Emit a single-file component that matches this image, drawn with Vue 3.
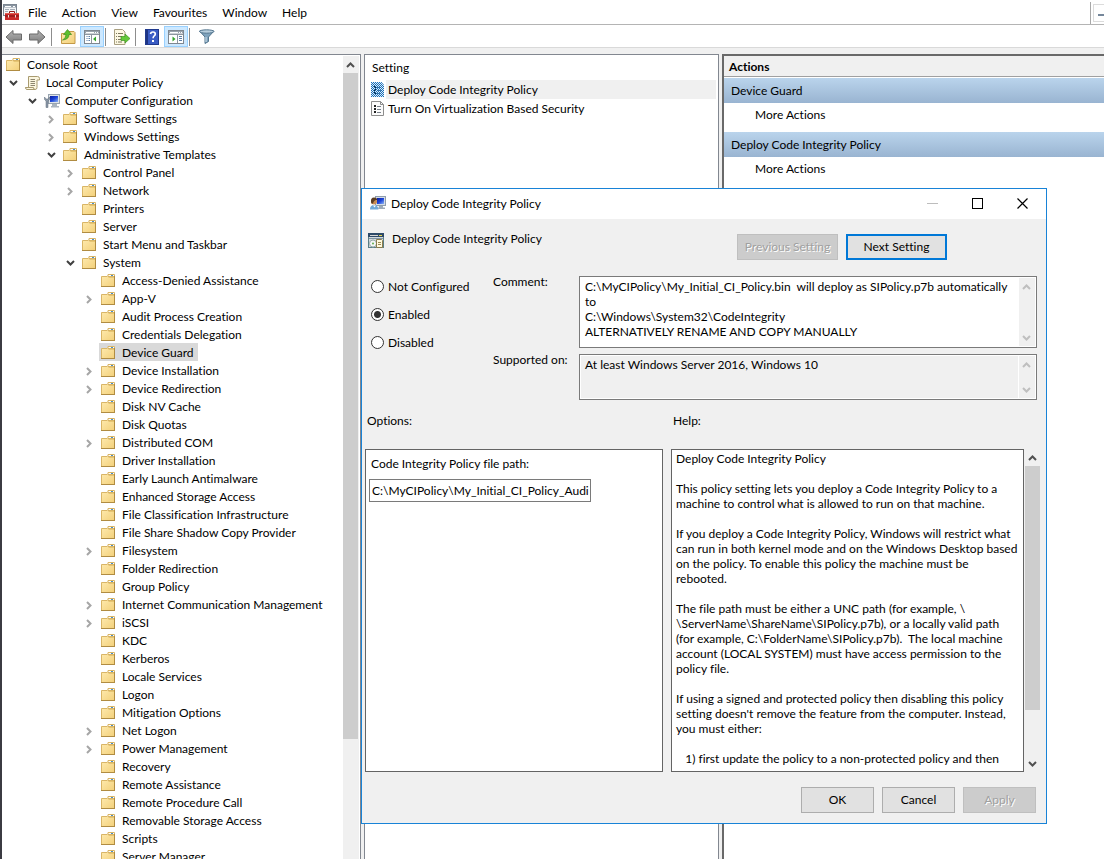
<script setup>
import { ref } from 'vue'

const menus = ['File', 'Action', 'View', 'Favourites', 'Window', 'Help']

const tools = [
  { icon: 'back', label: 'Back' },
  { icon: 'forward', label: 'Forward' },
  { sep: true },
  { icon: 'up', label: 'Up one level' },
  { icon: 'showtree', label: 'Show console tree', on: true },
  { sep: true },
  { icon: 'export', label: 'Export list' },
  { sep: true },
  { icon: 'help', label: 'Help' },
  { icon: 'showactions', label: 'Show action pane', on: true },
  { sep: true },
  { icon: 'filter', label: 'Filter' },
]

const node = (level, name, state = '', icon = 'folder') => ({ level, name, state, icon })
const tree = [
  node(0, 'Console Root'),
  node(1, 'Local Computer Policy', 'open', 'scroll'),
  node(2, 'Computer Configuration', 'open', 'computer'),
  node(3, 'Software Settings', 'closed'),
  node(3, 'Windows Settings', 'closed'),
  node(3, 'Administrative Templates', 'open'),
  node(4, 'Control Panel', 'closed'),
  node(4, 'Network', 'closed'),
  node(4, 'Printers'),
  node(4, 'Server'),
  node(4, 'Start Menu and Taskbar'),
  node(4, 'System', 'open'),
  node(5, 'Access-Denied Assistance'),
  node(5, 'App-V', 'closed'),
  node(5, 'Audit Process Creation'),
  node(5, 'Credentials Delegation'),
  node(5, 'Device Guard'),
  node(5, 'Device Installation', 'closed'),
  node(5, 'Device Redirection', 'closed'),
  node(5, 'Disk NV Cache'),
  node(5, 'Disk Quotas'),
  node(5, 'Distributed COM', 'closed'),
  node(5, 'Driver Installation'),
  node(5, 'Early Launch Antimalware'),
  node(5, 'Enhanced Storage Access'),
  node(5, 'File Classification Infrastructure'),
  node(5, 'File Share Shadow Copy Provider'),
  node(5, 'Filesystem', 'closed'),
  node(5, 'Folder Redirection'),
  node(5, 'Group Policy'),
  node(5, 'Internet Communication Management', 'closed'),
  node(5, 'iSCSI', 'closed'),
  node(5, 'KDC'),
  node(5, 'Kerberos'),
  node(5, 'Locale Services'),
  node(5, 'Logon'),
  node(5, 'Mitigation Options'),
  node(5, 'Net Logon', 'closed'),
  node(5, 'Power Management', 'closed'),
  node(5, 'Recovery'),
  node(5, 'Remote Assistance'),
  node(5, 'Remote Procedure Call'),
  node(5, 'Removable Storage Access'),
  node(5, 'Scripts'),
  node(5, 'Server Manager'),
]
const selected = ref('Device Guard')

const settings = [
  { name: 'Deploy Code Integrity Policy', icon: 'settingsel' },
  { name: 'Turn On Virtualization Based Security', icon: 'setting' },
]
const current = ref(settings[0].name)
const actionGroups = ['Device Guard', 'Deploy Code Integrity Policy']

const states = ['Not Configured', 'Enabled', 'Disabled']
const state = ref('Enabled')

const comment = ref(`C:\\MyCIPolicy\\My_Initial_CI_Policy.bin  will deploy as SIPolicy.p7b automatically
to
C:\\Windows\\System32\\CodeIntegrity
ALTERNATIVELY RENAME AND COPY MANUALLY`)
const supported = 'At least Windows Server 2016, Windows 10'
const filePath = ref('C:\\MyCIPolicy\\My_Initial_CI_Policy_Audi')

const helpText = `Deploy Code Integrity Policy

This policy setting lets you deploy a Code Integrity Policy to a
machine to control what is allowed to run on that machine.

If you deploy a Code Integrity Policy, Windows will restrict what
can run in both kernel mode and on the Windows Desktop based
on the policy. To enable this policy the machine must be
rebooted.

The file path must be either a UNC path (for example, \\
\\ServerName\\ShareName\\SIPolicy.p7b), or a locally valid path
(for example, C:\\FolderName\\SIPolicy.p7b).  The local machine
account (LOCAL SYSTEM) must have access permission to the
policy file.

If using a signed and protected policy then disabling this policy
setting doesn't remove the feature from the computer. Instead,
you must either:

   1) first update the policy to a non-protected policy and then`
</script>

<template>
  <div class="console">
    <svg class="defs" width="0" height="0" aria-hidden="true">
      <defs>
        <linearGradient id="gFolder" x1="0" y1="0" x2="1" y2="1">
          <stop offset="0" stop-color="#feeaae" /><stop offset="1" stop-color="#f3d07a" />
        </linearGradient>
        <linearGradient id="gScreen" x1="0" y1="0" x2="1" y2="1">
          <stop offset="0" stop-color="#0a1c9c" /><stop offset="0.5" stop-color="#1c44d8" /><stop offset="1" stop-color="#8fb6f6" />
        </linearGradient>
        <linearGradient id="gArrow" x1="0" y1="0" x2="0" y2="1">
          <stop offset="0" stop-color="#b4b4b4" /><stop offset="1" stop-color="#7c7c7c" />
        </linearGradient>
        <pattern id="pDither" width="2" height="2" patternUnits="userSpaceOnUse">
          <rect width="1" height="1" fill="#1a6fb8" /><rect x="1" y="1" width="1" height="1" fill="#1a6fb8" />
        </pattern>
      </defs>
      <symbol id="i-folder" viewBox="0 0 16 16">
        <path d="M.5 3.500h5.500l1-1h6.500v11H.5z" fill="url(#gFolder)" stroke="#d9b566" />
        <path d="M7 1.500h6.500v2H7z" fill="#fff" stroke="#d9b566" /><path d="M10 2.500h2" stroke="#4a90c8" />
        <path d="M7.500 4.500h6" stroke="#e6c573" /><path d="M0 13.500h14M13.500 3v11" stroke="#b08c42" />
      </symbol>
      <symbol id="i-scroll" viewBox="0 0 16 16">
        <path d="M3.500 1.500h9q2 0 2 2v1.500h-2.500v7.500q0 2-2 2H2q-1.500 0-1.500-2h3z" fill="#fbf6df" stroke="#a99b70" />
        <path d="M5.500 4.500h4.500M5.500 6.500h4.500M5.500 8.500h4.500M5.500 10.500h4.500" stroke="#8d8670" />
        <path d="M.5 12.500h8q0 2 1.500 2" fill="none" stroke="#a99b70" />
      </symbol>
      <symbol id="i-computer" viewBox="0 0 16 16">
        <rect x="4.500" y="1.500" width="11" height="9" fill="#dfe3e8" stroke="#98a4b0" />
        <rect x="6" y="3" width="8" height="6" fill="url(#gScreen)" />
        <path d="M8 11h5v2h2v1.500H7V13h1z" fill="#a9b4bf" />
        <path d="M.5 4v2.500L2 8v6.500h2V8l1.500-1.500V4L4 6H2z" fill="#8b98a6" stroke="#5c6b7a" stroke-width=".5" />
      </symbol>
      <symbol id="i-user" viewBox="0 0 16 16">
        <rect x="5.500" y="1.500" width="10" height="9" fill="#d4dce6" stroke="#8f9dac" />
        <rect x="7" y="3" width="7" height="6" fill="url(#gScreen)" />
        <path d="M9 11h4v1.500h2V14H8z" fill="#9eacb9" />
        <path d="M0 14.500q0-4.500 4-4.500t4.500 4.500z" fill="#6fa8d8" />
        <circle cx="4" cy="6.500" r="3" fill="#c98c52" /><path d="M1 7q-.5-4.500 3-4.500T7 5Q4 4.500 3 8.500H1.500z" fill="#5b3d23" />
        <path d="M3 10.500l1.500 2 1.500-2z" fill="#fff" />
      </symbol>
      <symbol id="i-policy" viewBox="0 0 16 16">
        <rect x=".5" y=".5" width="15" height="14" fill="#d3d9de" stroke="#5b7f86" />
        <path d="M0 0h16v4H0z" fill="#2e4a68" /><path d="M2 2.500h8" stroke="#d7d7d7" /><path d="M11 2.500h3" stroke="#e9d84b" />
        <path d="M1 5.500h14" stroke="#7f95a3" />
        <circle cx="5" cy="10.500" r="3.500" fill="#f5f7f7" stroke="#9aa" /><circle cx="5" cy="10.500" r="1" fill="#5fae4c" />
        <path d="M8.500 6.500h5l1 1v7h-6z" fill="#fff9dc" stroke="#8b7c4d" /><path d="M10 9.500h3M10 11.500h3" stroke="#9b8a55" />
      </symbol>
      <symbol id="i-mmc" viewBox="0 0 16 16">
        <rect x=".5" y=".5" width="13" height="11" fill="#f3f5f7" stroke="#7d8792" />
        <path d="M1 1h12v2.500H1z" fill="#8a95a1" /><path d="M2 2.500h6M10 2.500h2" stroke="#fff" />
        <path d="M2 5.500h4M7 5.500h5M2 7.500h3" stroke="#a4adb6" />
        <path d="M6.500 9V7.500h5V9" fill="none" stroke="#8d1c1c" />
        <rect x="2" y="9" width="14" height="7" fill="#c92b2b" /><path d="M2 9h14v1H2z" fill="#e05c50" />
        <path d="M2 12h14" stroke="#7d1515" /><path d="M5 11h1v2.500H5zM12 11h1v2.500h-1z" fill="#f0dada" />
      </symbol>
      <symbol id="i-setting" viewBox="0 0 14 16">
        <path d="M.5.5h9l3 3v11H.5z" fill="#fbfbfb" stroke="#8d8d8d" /><path d="M9.500.5v3h3" fill="none" stroke="#8d8d8d" />
        <path d="M3 5h2M3 8h2M3 11h2" stroke="#222" stroke-width="2" /><path d="M6 5.500h4M6 8.500h4M6 11.500h4" stroke="#77808a" />
      </symbol>
      <symbol id="i-settingsel" viewBox="0 0 14 16">
        <path d="M0 0h10.500l2.500 3v12H0z" fill="#dcebf7" />
        <path d="M3 5h2M3 8h2M3 11h2" stroke="#123" stroke-width="2" /><path d="M6 5.500h4M6 8.500h4M6 11.500h4" stroke="#4a7ba5" />
        <path d="M0 0h10.500l2.500 3v12H0z" fill="url(#pDither)" />
      </symbol>
      <symbol id="i-back" viewBox="0 0 18 16">
        <path d="M1 8l7-6.500V5h8.500v6H8v3.500z" fill="url(#gArrow)" stroke="#6b6b6b" />
      </symbol>
      <symbol id="i-forward" viewBox="0 0 18 16">
        <path d="M16 8L9 1.500V5H.5v6H9v3.500z" fill="url(#gArrow)" stroke="#6b6b6b" />
      </symbol>
      <symbol id="i-up" viewBox="0 0 18 16">
        <path d="M2.500 4.500h6l1-2h5.500l1 1v11H2.500z" fill="url(#gFolder)" stroke="#c49a48" />
        <path d="M3.500 11Q7 9.500 7 5.500H4.500L8.500.5l4 5H10q0 5-6.500 5.500z" fill="#5cc02e" stroke="#3c8f1e" stroke-width=".7" />
      </symbol>
      <symbol id="i-showtree" viewBox="0 0 18 16">
        <rect x="1.500" y="1.500" width="15" height="13" fill="#fff" stroke="#7f8790" /><path d="M2 2h14v2.500H2z" fill="#9aa3ad" />
        <path d="M3 3.500h8M12 3.500h1M14 3.500h1" stroke="#fff" /><path d="M2 5.500h14M8.500 6v8" stroke="#8e969f" />
        <path d="M3.500 7.500h3.500M3.500 9.500h3.500M3.500 11.500h3.500" stroke="#5d7fa8" stroke-dasharray="1 1 2" /><path d="M13 7.500v5l-3-2.500z" fill="#34a52a" />
      </symbol>
      <symbol id="i-showactions" viewBox="0 0 18 16">
        <rect x="1.500" y="1.500" width="15" height="13" fill="#fff" stroke="#7f8790" /><path d="M2 2h14v2.500H2z" fill="#9aa3ad" />
        <path d="M3 3.500h8M12 3.500h1M14 3.500h1" stroke="#fff" /><path d="M2 5.500h14M10.500 6v8" stroke="#8e969f" />
        <path d="M12 7.500h3M12 9.500h3M12 11.500h3" stroke="#5d7fa8" /><path d="M5.500 7.500v5l3-2.500z" fill="#34a52a" />
      </symbol>
      <symbol id="i-export" viewBox="0 0 18 16">
        <path d="M1.500.5h8l2.500 2.500v12.500H1.500z" fill="#fdf8e2" stroke="#a89f80" />
        <path d="M3 4.500h1M5 4.500h5M3 7.500h1M5 7.500h4M3 10.500h1M5 10.500h3M3 13h1M5 13h4" stroke="#7d7860" />
        <path d="M8 7.500h4V5l5 4.500-5 4.500v-2.500H8z" fill="#63c93a" stroke="#3d9422" stroke-width=".7" />
      </symbol>
      <symbol id="i-help" viewBox="0 0 18 16">
        <rect x="2.500" y=".5" width="13" height="15" fill="#3a5cc4" stroke="#203a8e" /><path d="M4 1v14" stroke="#1e3584" stroke-width="2" />
        <path d="M7.500 5q.3-2 2.500-2t2.300 2q0 1.300-1.300 2.100-.9.6-.9 2.100" fill="none" stroke="#fff" stroke-width="1.700" /><rect x="9" y="11" width="2" height="2" fill="#fff" />
      </symbol>
      <symbol id="i-filter" viewBox="0 0 18 16">
        <path d="M2.500 2l5.500 6v6.500l3.500-2V8L17 2z" fill="#7fa3bd" stroke="#53758e" />
        <ellipse cx="9.700" cy="2.500" rx="7.200" ry="1.700" fill="#b9cfde" stroke="#53758e" /><path d="M9 8v5" stroke="#d5e4ee" />
      </symbol>
      <symbol id="i-chevup" viewBox="0 0 9 6"><path d="M1 5l3.500-3.500L8 5" fill="none" stroke="currentColor" stroke-width="2" /></symbol>
      <symbol id="i-chevdown" viewBox="0 0 9 6"><path d="M1 1l3.500 3.500L8 1" fill="none" stroke="currentColor" stroke-width="2" /></symbol>
      <symbol id="i-chevright" viewBox="0 0 6 9"><path d="M1 1l3.500 3.500L1 8" fill="none" stroke="currentColor" stroke-width="2" /></symbol>
    </svg>

    <header class="menubar">
      <svg class="ic16"><use href="#i-mmc" /></svg>
      <nav class="menus">
        <button v-for="m in menus" :key="m" type="button">{{ m }}</button>
      </nav>
      <div class="mdi"><button type="button" aria-label="Minimise child window"><i /></button></div>
    </header>

    <div class="toolbar">
      <template v-for="(t, i) in tools" :key="i">
        <span v-if="t.sep" class="sep" />
        <button v-else type="button" class="tool" :class="{ on: t.on }" :aria-label="t.label">
          <svg width="18" height="16"><use :href="'#i-' + t.icon" /></svg>
        </button>
      </template>
    </div>

    <main class="panes">
      <section class="pane treepane">
        <ul class="tree">
          <li v-for="n in tree" :key="n.name" :class="'lv' + n.level">
            <button v-if="n.state" type="button" class="twist" :class="n.state" :aria-label="'Toggle ' + n.name">
              <svg v-if="n.state === 'open'" width="9" height="6"><use href="#i-chevdown" /></svg>
              <svg v-else width="6" height="9"><use href="#i-chevright" /></svg>
            </button>
            <span v-else-if="n.level" class="twist" />
            <button type="button" class="node" :class="{ selected: n.name === selected }" @click="selected = n.name">
              <svg class="ic16"><use :href="'#i-' + n.icon" /></svg>{{ n.name }}
            </button>
          </li>
        </ul>
        <div class="scrollbar long">
          <span class="arrow"><svg width="9" height="6"><use href="#i-chevup" /></svg></span>
          <span class="thumb" />
        </div>
      </section>

      <section class="pane listpane">
        <table class="list">
          <thead><tr><th scope="col">Setting</th></tr></thead>
          <tbody>
            <tr v-for="s in settings" :key="s.name" :class="{ selected: s.name === current }" @click="current = s.name">
              <td><div class="cell"><svg width="14" height="16"><use :href="'#i-' + s.icon" /></svg><span>{{ s.name }}</span></div></td>
            </tr>
          </tbody>
        </table>
      </section>

      <section class="actions">
        <h2>Actions</h2>
        <div v-for="g in actionGroups" :key="g" class="group">
          <h3>{{ g }}</h3>
          <button type="button">More Actions</button>
        </div>
      </section>
    </main>

    <div class="dialog" role="dialog" aria-labelledby="dlg-title">
      <div class="titlebar">
        <svg class="ic16"><use href="#i-user" /></svg>
        <span id="dlg-title">Deploy Code Integrity Policy</span>
        <button type="button" aria-label="Minimise" disabled><svg width="11" height="11"><path d="M0 5.500h11" stroke="#bdbdbd" /></svg></button>
        <button type="button" aria-label="Maximise"><svg width="11" height="11"><rect x=".5" y=".5" width="10" height="10" fill="none" stroke="#000" /></svg></button>
        <button type="button" aria-label="Close"><svg width="11" height="11"><path d="M.5.5l10 10M10.500.5l-10 10" stroke="#000" stroke-width="1.200" /></svg></button>
      </div>

      <div class="head">
        <svg class="ic16"><use href="#i-policy" /></svg>
        <span class="name">Deploy Code Integrity Policy</span>
        <button type="button" class="btn wide" disabled>Previous Setting</button>
        <button type="button" class="btn wide primary">Next Setting</button>
      </div>

      <div class="form">
        <div class="radios">
          <label v-for="s in states" :key="s"><input v-model="state" type="radio" name="state" :value="s" />{{ s }}</label>
        </div>
        <label for="comment">Comment:</label>
        <div class="field">
          <textarea id="comment" v-model="comment" />
          <div class="scrollbar off">
            <span class="arrow"><svg width="9" height="6"><use href="#i-chevup" /></svg></span>
            <span class="arrow"><svg width="9" height="6"><use href="#i-chevdown" /></svg></span>
          </div>
        </div>
        <label for="supported">Supported on:</label>
        <div class="field readonly">
          <textarea id="supported" :value="supported" readonly />
          <div class="scrollbar off">
            <span class="arrow"><svg width="9" height="6"><use href="#i-chevup" /></svg></span>
            <span class="arrow"><svg width="9" height="6"><use href="#i-chevdown" /></svg></span>
          </div>
        </div>
      </div>

      <div class="detail">
        <h4>Options:</h4>
        <h4>Help:</h4>
        <div class="box options">
          <label for="path">Code Integrity Policy file path:</label>
          <input id="path" v-model="filePath" type="text" />
        </div>
        <div class="helpwrap">
          <div class="box help">{{ helpText }}</div>
          <div class="scrollbar">
            <span class="arrow"><svg width="9" height="6"><use href="#i-chevup" /></svg></span>
            <span class="thumb" />
            <span class="arrow"><svg width="9" height="6"><use href="#i-chevdown" /></svg></span>
          </div>
        </div>
      </div>

      <div class="foot">
        <button type="button" class="btn">OK</button>
        <button type="button" class="btn">Cancel</button>
        <button type="button" class="btn" disabled>Apply</button>
      </div>
    </div>
  </div>
</template>

<style>
body { margin: 0; }
</style>

<style scoped>
.console {
  position: relative;
  display: flex;
  flex-direction: column;
  height: 100vh;
  overflow: hidden;
  box-sizing: border-box;
  border-left: 2px solid #3b3b42;
  background: #f0f0f0;
  color: #000;
  font: 12px/15px Lato, "Open Sans", sans-serif;
  font-variant-ligatures: none;
}
.console *, .console *::before { box-sizing: border-box; }
.defs { position: absolute; }
svg { display: block; flex: none; }
.ic16 { width: 16px; height: 16px; }
button, input, textarea { font: inherit; color: inherit; font-variant-ligatures: none; }
button { border: 0; padding: 0; margin: 0; background: none; }
h2, h3, h4, ul { margin: 0; padding: 0; font: inherit; list-style: none; }

.menubar { display: flex; align-items: center; flex: none; height: 25px; padding-left: 1px; background: #fff; border-bottom: 1px solid #b4b4b4; }
.menus { display: flex; gap: 15px; margin-left: 9px; flex: 1; }
.mdi { width: 14px; height: 22px; margin-top: 2px; border-left: 1px solid #a8a8a8; padding: 2px 0 0 2px; overflow: hidden; }
.mdi button { display: block; width: 22px; height: 18px; border: 1px solid #dcdcdc; }
.mdi i { display: block; width: 7px; height: 2px; margin: 4px 0 0 4px; background: #75879a; }

.toolbar { display: flex; align-items: center; flex: none; height: 23px; padding-top: 1px; background: #fff; border-bottom: 1px solid #d9d9d9; }
.tool { display: flex; align-items: center; justify-content: center; width: 24px; height: 21px; padding-top: 1px; border: 1px solid transparent; }
.tool.on { background: #cce8ff; border-color: #99d1ff; }
.sep { width: 1px; height: 18px; margin: 0 4px 0 1px; background: #8d8d8d; }

.panes { flex: 1; min-height: 0; display: grid; grid-template-columns: 359px 355fr 382fr; gap: 3px; padding-top: 6px; }
.pane { min-width: 0; min-height: 0; overflow: hidden; background: #fff; border: solid #828790; border-width: 1px 1px 0; }
.treepane { display: flex; border-left: 0; }
.tree { flex: 1; }
.tree li { display: flex; align-items: center; height: 18px; white-space: nowrap; }
.lv0 { padding-left: 2px; }
.lv1 { padding-left: 4px; }
.lv2 { padding-left: 23px; }
.lv3 { padding-left: 42px; }
.lv4 { padding-left: 61px; }
.lv5 { padding-left: 80px; }
.twist { display: flex; flex: none; align-items: center; justify-content: center; width: 14px; height: 18px; padding-top: 2px; margin-right: 3px; color: #a6a6a6; }
.twist.open { color: #404040; }
.node { display: flex; align-items: center; gap: 5px; height: 18px; padding: 0 4px 0 2px; }
.node .ic16 { margin-top: 1px; }
.node.selected { background: #d9d9d9; }

.scrollbar { display: flex; flex-direction: column; flex: none; width: 16px; background: #f0f0f0; color: #505050; }
.arrow { display: flex; align-items: center; justify-content: center; width: 15px; height: 17px; }
.thumb { width: 15px; background: #cdcdcd; }
.scrollbar.off { color: #bfbfbf; justify-content: space-between; }
.scrollbar.long { margin: 1px 1px 0 0; }
.long .thumb { height: 83%; }

.list { width: 100%; border-collapse: collapse; }
.list th { height: 25px; padding: 0 0 0 7px; text-align: left; font-weight: normal; }
.list td { padding: 0 2px 0 6px; }
.cell { display: flex; align-items: center; gap: 1px; height: 19px; }
.cell span { flex: 1; padding-left: 2px; line-height: 19px; white-space: nowrap; }
.selected .cell span { background: #f0f0f0; }

.actions { min-width: 0; background: #fff; border: solid #696969; border-width: 2px 0 0 2px; }
.actions h2 { height: 21px; padding-left: 5px; background: #f0f0f0; border-bottom: 1px solid #a0a0a0; font-weight: bold; line-height: 21px; }
.group { padding-top: 1px; }
.group h3 { height: 25px; padding-left: 7px; line-height: 25px; background: linear-gradient(#bad4ec, #99b4d1); }
.group button { display: block; height: 28px; padding: 0 0 6px 31px; }

.dialog { position: absolute; left: 359px; top: 188px; width: 686px; border: 1px solid #1883d7; background: #f0f0f0; }
.titlebar { display: flex; align-items: center; height: 30px; padding: 0 1px 2px 8px; background: #fff; }
.titlebar span { flex: 1; margin-left: 5px; }
.titlebar button { display: flex; align-items: center; justify-content: center; width: 45px; height: 28px; }
.head { display: flex; align-items: flex-start; gap: 8px; height: 57px; padding: 10px 99px 0 6px; }
.head .ic16 { margin-top: 4px; }
.head .name { flex: 1; line-height: 20px; }
.head .btn { margin-top: 5px; }
.btn { width: 73px; height: 26px; padding-bottom: 1px; border: 1px solid #adadad; background: #e1e1e1; text-align: center; white-space: nowrap; }
.btn.wide { width: 101px; }
.btn.primary { border: 2px solid #0078d7; }
.btn:disabled { border-color: #bfbfbf; background: #ccc; color: #a0a0a0; text-shadow: 1px 1px 0 #fff; }

.form { display: grid; grid-template-columns: 122px 86px 1fr; grid-template-rows: 72px 46px; row-gap: 6px; padding: 0 9px; }
.form > label { line-height: 12px; }
.radios { grid-row: span 2; display: flex; flex-direction: column; gap: 8px; }
.radios label { display: flex; align-items: center; gap: 4px; height: 20px; }
.radios input { appearance: none; flex: none; width: 13px; height: 13px; margin: 0; border: 1px solid #333; border-radius: 50%; background: #fff; }
.radios input:checked { background: radial-gradient(circle, #333 3px, #fff 4px); }
.field { display: flex; min-width: 0; padding: 1px; border: 1px solid #7a7a7a; background: #fff; }
.field textarea { flex: 1; min-width: 0; padding: 1px 4px; border: 0; outline: 0; resize: none; overflow: hidden; background: transparent; white-space: pre-wrap; }
.readonly textarea { background: #f0f0f0; border-right: 1px solid #fff; }

.detail { display: grid; grid-template-columns: 298px 1fr; grid-template-rows: 49px 323px; column-gap: 8px; padding: 0 6px 0 3px; }
.detail h4 { padding: 13px 0 0 2px; line-height: 16px; }
.box { border: 1px solid #646464; background: #fff; }
.options { padding: 6px 3px; }
.options label { display: block; padding-left: 2px; line-height: 16px; }
.options input { display: block; width: 222px; height: 23px; margin-top: 7px; padding: 0 0 1px 2px; border: 1px solid #7a7a7a; background: #fff; outline: 0; }
.helpwrap { display: flex; min-width: 0; gap: 1px; }
.help { flex: 1; min-width: 0; padding: 1px 4px; overflow: hidden; white-space: pre; }
.helpwrap .scrollbar { width: 15px; }
.helpwrap .thumb { height: 244px; margin-bottom: auto; }
.foot { display: flex; justify-content: flex-end; gap: 8px; padding: 15px 10px 10px; }
</style>
